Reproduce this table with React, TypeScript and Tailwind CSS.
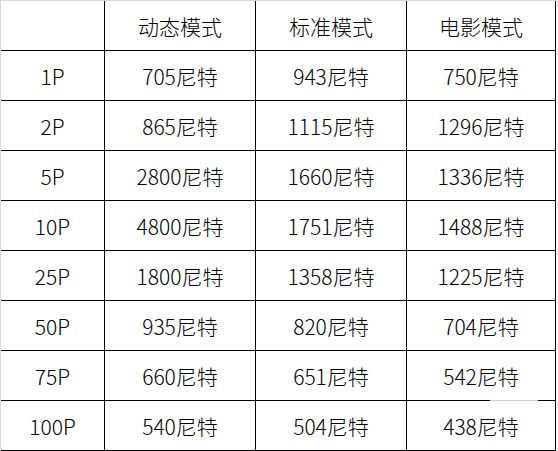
import React from "react";

const headers = ["", "动态模式", "标准模式", "电影模式"];
const rows: string[][] = [
  ["1P", "705尼特", "943尼特", "750尼特"],
  ["2P", "865尼特", "1115尼特", "1296尼特"],
  ["5P", "2800尼特", "1660尼特", "1336尼特"],
  ["10P", "4800尼特", "1751尼特", "1488尼特"],
  ["25P", "1800尼特", "1358尼特", "1225尼特"],
  ["50P", "935尼特", "820尼特", "704尼特"],
  ["75P", "660尼特", "651尼特", "542尼特"],
  ["100P", "540尼特", "504尼特", "438尼特"],
];

function Row({ cells }: { cells: string[] }) {
  return (
    <div className="grid grid-cols-[104px_151px_151px_149px] h-[50px]">
      {cells.map((c, i) => (
        <div
          key={i}
          className="flex items-center justify-center border-r border-b border-black pt-[3px] text-[21px] font-light text-black"
        >
          {c}
        </div>
      ))}
    </div>
  );
}

export default function App() {
  return (
    <div
      className="relative w-[558px] h-[451px] bg-white border-t border-l border-[#d9d9d9] overflow-hidden"
      style={{ fontFamily: '"Noto Sans CJK SC", "Noto Sans", sans-serif' }}
    >
      <Row cells={headers} />
      {rows.map((r, i) => (
        <Row key={i} cells={r} />
      ))}
      <div className="absolute left-[489px] top-[399px] h-px w-[48px] bg-[#cfcfcf]" />
    </div>
  );
}
